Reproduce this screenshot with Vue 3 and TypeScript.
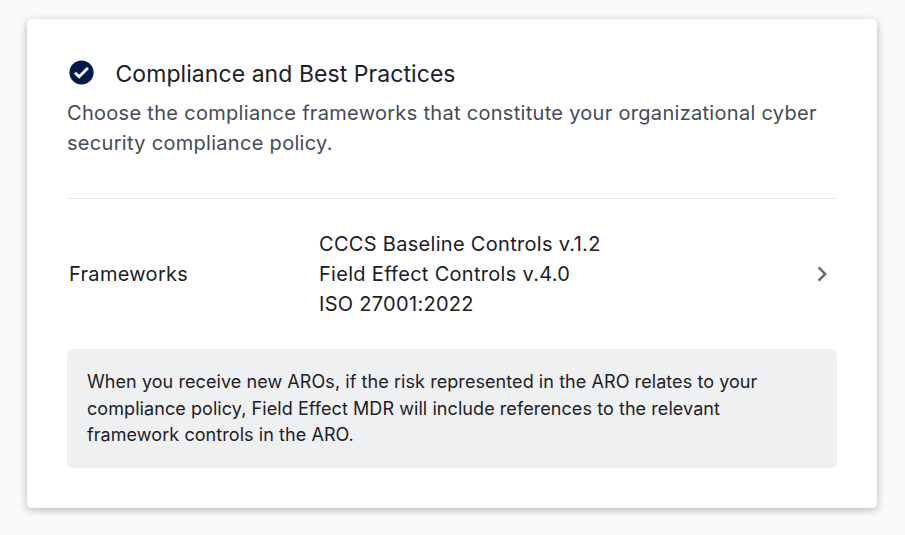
<script setup lang="ts">
const frameworks: string[] = ['CCCS Baseline Controls v.1.2', 'Field Effect Controls v.4.0', 'ISO 27001:2022']
</script>

<template>
  <div class="page">
    <section class="card">
      <header class="head">
        <svg class="check" width="29" height="29" viewBox="0 0 24 24">
          <circle cx="12" cy="12" r="10" fill="#001a4d" />
          <path fill="none" stroke="#fff" stroke-width="2.3" d="M6.6 12.2 10 15.6l7.3-7.3" />
        </svg>
        <h2>Compliance and Best Practices</h2>
      </header>
      <p class="desc">Choose the compliance frameworks that constitute your organizational cyber security compliance policy.</p>
      <div class="row">
        <span class="label">Frameworks</span>
        <div class="values">
          <div v-for="f in frameworks" :key="f">{{ f }}</div>
        </div>
        <svg class="chev" width="30" height="30" viewBox="0 0 24 24">
          <path fill="#666b73" d="M10 6 8.59 7.41 13.17 12l-4.58 4.59L10 18l6-6z" />
        </svg>
      </div>
      <div class="note">When you receive new AROs, if the risk represented in the ARO relates to your compliance policy, Field Effect MDR will include references to the relevant framework controls in the ARO.</div>
    </section>
  </div>
</template>

<style>
body {
  background: #f9fafc;
}
</style>

<style scoped>
.page {
  height: 535px;
  box-sizing: border-box;
  padding: 19px 28px 0 27px;
  font-family: Inter, sans-serif;
  overflow: hidden;
}
.card {
  background: #fff;
  border-radius: 5px;
  box-shadow: 0 2px 8px rgba(0, 0, 0, 0.28);
  padding: 40px;
  height: 489px;
  box-sizing: border-box;
}
.head {
  display: flex;
  align-items: center;
  gap: 20px;
  height: 29px;
}
.check {
  flex: none;
  margin-left: -0.5px;
  margin-top: -2px;
}
h2 {
  margin: 0;
  font-size: 23px;
  font-weight: 400;
  line-height: 30px;
  color: #1c2026;
  letter-spacing: 0.06px;
}
.desc {
  margin: 10px 0 0;
  font-size: 20px;
  line-height: 30px;
  letter-spacing: 0.3px;
  color: #444b58;
}
.row {
  margin-top: 40px;
  border-top: 1px solid #e8e9eb;
  display: flex;
  align-items: center;
  padding: 30px 0 30px 2px;
}
.label {
  width: 250px;
  font-size: 20px;
  letter-spacing: 0.3px;
  color: #1c2026;
}
.values {
  flex: 1;
  font-size: 20px;
  line-height: 30px;
  letter-spacing: 0.3px;
  color: #1c2026;
}
.note {
  background: #eff0f2;
  border-radius: 6px;
  padding: 20px 20px 19px;
  font-size: 18px;
  line-height: 26.5px;
  letter-spacing: 0.07px;
  color: #1c2026;
}
</style>
